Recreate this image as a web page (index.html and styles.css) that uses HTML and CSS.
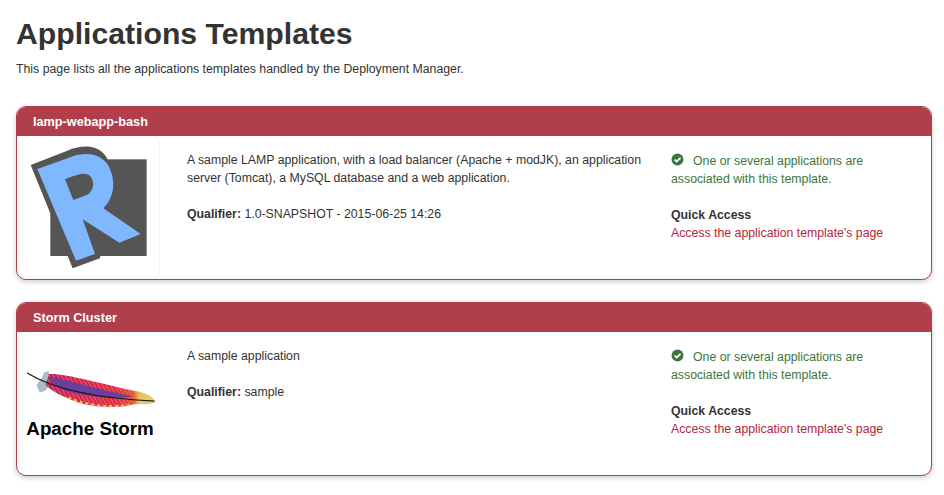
FILE: index.html
```html
<!DOCTYPE html>
<html lang="en">
<head>
    <meta charset="UTF-8">
    <title>Applications Templates</title>
    <link rel="stylesheet" href="styles.css">
</head>
<body>
    <h1>Applications Templates</h1>
    <p class="intro">This page lists all the applications templates handled by the Deployment Manager.</p>

    <div class="card">
        <div class="card-title">lamp-webapp-bash</div>
        <div class="card-body">
            <div class="logo logo-framed">
                <svg class="logo-r" viewBox="51 138 429 429" aria-hidden="true">
                    <rect x="151" y="208" width="289" height="290" fill="#555555"/>
                    <path d="M92 225 L200 183 C240 166 285 162 312 192 C332 215 338 250 332 290 L300 505 L218 535 Z" fill="#555555"/>
                    <path fill-rule="evenodd" fill="#7fb8ff" d="M112 237 L215 200 C255 186 298 190 322 222 C345 258 350 315 310 355 L422 432 L358 458 L248 388 L285 492 L228 512 Z M195 268 L220 330 L262 314 C282 302 284 276 272 260 C260 246 240 250 195 268 Z"/>
                </svg>
            </div>
            <div class="desc">
                <p>A sample LAMP application, with a load balancer (Apache + modJK), an application server (Tomcat), a MySQL database and a web application.</p>
                <p><strong>Qualifier:</strong> 1.0-SNAPSHOT - 2015-06-25 14:26</p>
            </div>
            <div class="side">
                <p class="status">
                    <svg class="check" viewBox="0 0 14 14" aria-hidden="true"><circle cx="7" cy="7" r="6.4" fill="#3c763d"/><path d="M3.9 7.2 L6.1 9.2 L10.2 5.2" fill="none" stroke="#fff" stroke-width="2"/></svg>One or several applications are associated with this template.
                </p>
                <p><strong>Quick Access</strong><br><a href="#">Access the application template's page</a></p>
            </div>
        </div>
    </div>

    <div class="card">
        <div class="card-title">Storm Cluster</div>
        <div class="card-body">
            <div class="logo">
                <svg class="feather" viewBox="51 210 429 130" aria-hidden="true">
                    <defs>
                        <linearGradient id="vane" x1="0" y1="0" x2="1" y2="0">
                            <stop offset="0" stop-color="#b01f6a"/>
                            <stop offset="0.2" stop-color="#d01c62"/>
                            <stop offset="0.65" stop-color="#e0244f"/>
                            <stop offset="0.8" stop-color="#e8503c"/>
                            <stop offset="0.85" stop-color="#e8c560"/>
                            <stop offset="1" stop-color="#e6cf78"/>
                        </linearGradient>
                        <pattern id="barbs" width="10" height="30" patternUnits="userSpaceOnUse" patternTransform="rotate(-32)">
                            <rect width="3" height="30" fill="#f08a3c" opacity="0.7"/>
                        </pattern>
                    </defs>
                    <path d="M146 220 L132 222 L124 240 L108 262 L118 284 L136 278 L146 262 Z" fill="#a9bcc7"/>
                    <path d="M146 228 C200 226 300 258 420 282 C445 288 462 298 467 312 C455 324 420 318 400 320 C340 334 280 326 240 316 C200 302 160 284 136 262 Z" fill="url(#vane)"/>
                    <path d="M146 228 C200 226 300 258 420 282 C440 286 400 316 400 320 C340 334 280 326 240 316 C200 302 160 284 136 262 Z" fill="url(#barbs)"/>
                    <path d="M146 236 C200 246 290 274 400 296 C330 306 260 296 200 280 C175 272 155 258 146 236 Z" fill="#6d3f9c"/>
                    <path d="M205 300 C260 322 330 332 400 320" fill="none" stroke="#efc35a" stroke-width="6" stroke-dasharray="9 9"/>
                    <path d="M80 225 C140 262 250 300 465 310" fill="none" stroke="#1a1a1a" stroke-width="4"/>
                </svg>
                <span class="logo-name">Apache Storm</span>
            </div>
            <div class="desc">
                <p>A sample application</p>
                <p><strong>Qualifier:</strong> sample</p>
            </div>
            <div class="side">
                <p class="status">
                    <svg class="check" viewBox="0 0 14 14" aria-hidden="true"><circle cx="7" cy="7" r="6.4" fill="#3c763d"/><path d="M3.9 7.2 L6.1 9.2 L10.2 5.2" fill="none" stroke="#fff" stroke-width="2"/></svg>One or several applications are associated with this template.
                </p>
                <p><strong>Quick Access</strong><br><a href="#">Access the application template's page</a></p>
            </div>
        </div>
    </div>
</body>
</html>
```

FILE: styles.css
```css
body { font-family: "Liberation Sans", Arial, sans-serif; font-size: 12.3px; line-height: 18px; margin: 0; padding: 0 12px 0 16px; background-color: #fff; color: #333; }
h1 { font-size: 30.2px; line-height: 35px; font-weight: bold; margin: 0; padding-top: 16px; }
p { margin: 0 0 18px; }
p:last-child { margin-bottom: 0; }
.intro { margin: 9px 0 28px; }
.card { height: 174px; box-sizing: border-box; margin-bottom: 22px; border: 1px solid #b03e4b; border-radius: 10px; box-shadow: 0 2px 5px rgba(0,0,0,0.2); background-color: #fff; overflow: hidden; }
.card-title { height: 29px; line-height: 30px; padding: 0 16px; background-color: #b03e4b; color: #fff; font-weight: bold; font-size: 12.7px; }
.card-body { display: grid; grid-template-columns: 143px 500px 1fr; height: 143px; }
.logo { display: flex; flex-direction: column; align-items: center; }
.logo-framed { border: 1px solid #edf3fb; border-top: 0; border-left: 0; border-radius: 8px; box-sizing: border-box; }
.logo-r { width: 143px; height: 143px; flex: none; }
.feather { width: 143px; height: 43px; margin-top: 36px; flex: none; }
.logo-name { font-size: 18.8px; line-height: 24px; font-weight: bold; color: #000; margin-top: 6px; padding-left: 3px; white-space: nowrap; }
.desc { padding: 15px 10px 0 27px; color: #333; }
.side { padding: 16px 30px 0 11px; }
.status { color: #3c763d; }
.check { width: 13px; height: 13px; margin-right: 9px; vertical-align: -1px; }
a { color: #b5243c; text-decoration: none; }
```
